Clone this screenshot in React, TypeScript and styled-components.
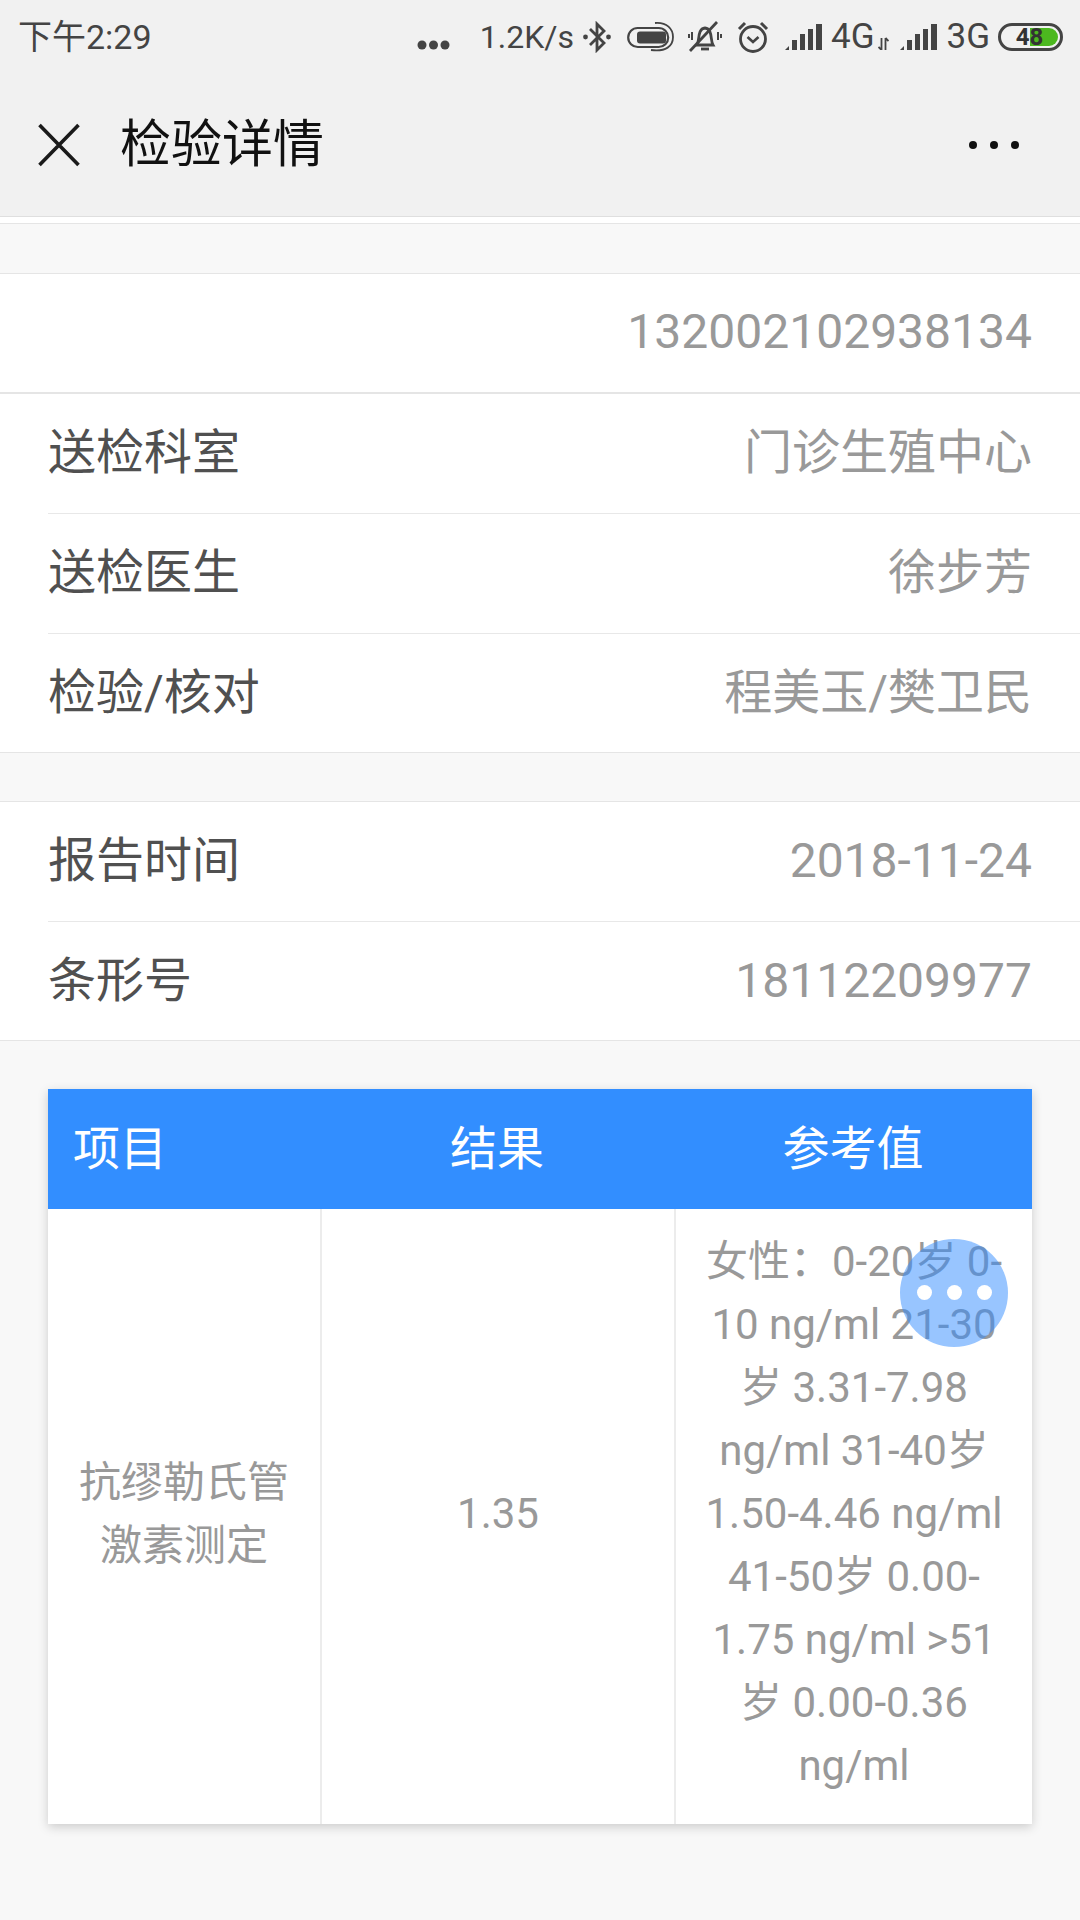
import React from "react";
import styled, { createGlobalStyle } from "styled-components";

const FONT = `Roboto, "Noto Sans CJK SC", sans-serif`;

interface InfoRow {
  label: string;
  value: string;
}

const doctorRows: InfoRow[] = [
  { label: "送检科室", value: "门诊生殖中心" },
  { label: "送检医生", value: "徐步芳" },
  { label: "检验/核对", value: "程美玉/樊卫民" },
];

const reportRows: InfoRow[] = [
  { label: "报告时间", value: "2018-11-24" },
  { label: "条形号", value: "18112209977" },
];

const SignalIcon = () => (
  <svg width="38" height="26" viewBox="0 0 38 26">
    <path d="M0 26 L4 22 V26 Z" fill="#444" />
    <rect x="7" y="16" width="5" height="10" fill="#444" />
    <rect x="15" y="10" width="5" height="16" fill="#444" />
    <rect x="23" y="5" width="5" height="21" fill="#444" />
    <rect x="31" y="0" width="6" height="26" fill="#444" />
  </svg>
);

const App: React.FC = () => {
  return (
    <Page>
      <GlobalStyle />
      <Header>
        <StatusBar>
          <StatusTime>下午2:29</StatusTime>
          <StatusRight>
            <StatusItem>
              <svg width="33" height="28" viewBox="0 0 33 28">
                <circle cx="5" cy="22" r="4.5" fill="#444" />
                <circle cx="16.5" cy="22" r="4.5" fill="#444" />
                <circle cx="28" cy="22" r="4.5" fill="#444" />
              </svg>
            </StatusItem>
            <StatusItem $gap={30}>
              <Speed>1.2K/s</Speed>
            </StatusItem>
            <StatusItem $gap={9}>
              <svg width="28" height="32" viewBox="0 0 28 32">
                <path d="M7 8 L21 22 L14 29 V3 L21 10 L7 24" fill="none" stroke="#444" strokeWidth="2.8" />
                <circle cx="2.5" cy="16" r="2.4" fill="#444" />
                <circle cx="25.5" cy="16" r="2.4" fill="#444" />
              </svg>
            </StatusItem>
            <StatusItem $gap={16}>
              <svg width="47" height="32" viewBox="0 0 47 32">
                <rect x="1.2" y="7" width="40" height="19" rx="9.5" fill="none" stroke="#444" strokeWidth="2.2" />
                <rect x="10" y="10.5" width="29" height="12" rx="3" fill="#444" />
                <path d="M28 2 C40 1 46 8 46 16 C46 25 39 31 24 29" fill="none" stroke="#444" strokeWidth="1.8" />
              </svg>
            </StatusItem>
            <StatusItem $gap={14}>
              <svg width="34" height="34" viewBox="0 0 34 34">
                <path d="M9 25 C12 20 9 9 17 8 C25 9 22 20 25 25 Z" fill="none" stroke="#444" strokeWidth="2.8" />
                <path d="M13 29 H21" stroke="#444" strokeWidth="2.8" />
                <path d="M29 2 L2 31" stroke="#444" strokeWidth="2.8" />
                <path d="M4 12 V20 M1 14 V18 M30 12 V20 M33 14 V18" stroke="#444" strokeWidth="2" />
              </svg>
            </StatusItem>
            <StatusItem $gap={15}>
              <svg width="32" height="32" viewBox="0 0 32 32">
                <circle cx="16" cy="18" r="12.5" fill="none" stroke="#444" strokeWidth="2.8" />
                <path d="M10.5 16 L16 21 L21.5 16" fill="none" stroke="#444" strokeWidth="2.6" />
                <path d="M2 8 L8 2 M24 2 L30 8" stroke="#444" strokeWidth="3" />
              </svg>
            </StatusItem>
            <StatusItem $gap={16}>
              <SignalIcon />
            </StatusItem>
            <StatusItem $gap={8}>
              <NetworkText>4G</NetworkText>
            </StatusItem>
            <StatusItem $gap={4}>
              <svg width="11" height="26" viewBox="0 0 11 26">
                <path d="M3.5 14 V26 M0.5 23 L3.5 26 M7.5 26 V14 M7.5 14 L10.5 17" fill="none" stroke="#444" strokeWidth="1.8" />
              </svg>
            </StatusItem>
            <StatusItem $gap={11}>
              <SignalIcon />
            </StatusItem>
            <StatusItem $gap={8}>
              <NetworkText>3G</NetworkText>
            </StatusItem>
            <StatusItem $gap={8}>
              <Battery>
                <BatteryFill />
                <BatteryText>48</BatteryText>
              </Battery>
            </StatusItem>
          </StatusRight>
        </StatusBar>
        <NavBar>
          <NavLeft>
            <svg width="42" height="44" viewBox="0 0 42 44">
              <path d="M1.5 2 L40.5 42 M40.5 2 L1.5 42" stroke="#1a1a1a" strokeWidth="3.6" />
            </svg>
            <NavTitle>检验详情</NavTitle>
          </NavLeft>
          <svg width="52" height="10" viewBox="0 0 52 10">
            <circle cx="5" cy="5" r="4" fill="#111" />
            <circle cx="26" cy="5" r="4" fill="#111" />
            <circle cx="47" cy="5" r="4" fill="#111" />
          </svg>
        </NavBar>
      </Header>

      <TopStrip />
      <GapBlock $height={49} />

      <SectionBlock>
        <SoloRow>
          <Value>132002102938134</Value>
        </SoloRow>
        {doctorRows.map((row) => (
          <Row key={row.label}>
            <Label>{row.label}</Label>
            <Value>{row.value}</Value>
          </Row>
        ))}
      </SectionBlock>

      <GapBlock $height={48} />

      <SectionBlock>
        {reportRows.map((row) => (
          <Row key={row.label}>
            <Label>{row.label}</Label>
            <Value>{row.value}</Value>
          </Row>
        ))}
      </SectionBlock>

      <TableCard>
        <TableHead>
          <HeadCell $left>项目</HeadCell>
          <HeadCell>结果</HeadCell>
          <HeadCell>参考值</HeadCell>
        </TableHead>
        <TableBody>
          <BodyCell>抗缪勒氏管激素测定</BodyCell>
          <BodyCell>1.35</BodyCell>
          <BodyCell>
            女性：0-20岁 0-10 ng/ml 21-30岁 3.31-7.98 ng/ml 31-40岁 1.50-4.46 ng/ml
            41-50岁 0.00-1.75 ng/ml &gt;51岁 0.00-0.36 ng/ml
          </BodyCell>
        </TableBody>
      </TableCard>

      <FloatButton>
        <FloatDot />
        <FloatDot />
        <FloatDot />
      </FloatButton>
    </Page>
  );
};

const GlobalStyle = createGlobalStyle`
  html, body {
    margin: 0;
    padding: 0;
    background: #f8f8f8;
  }
  * {
    box-sizing: border-box;
  }
`;

const Page = styled.div`
  position: relative;
  width: 1080px;
  height: 1920px;
  overflow: hidden;
  background: #f8f8f8;
  font-family: ${FONT};
`;

const Header = styled.header`
  background: #f1f1f1;
  border-bottom: 1px solid #dfdfdf;
  height: 217px;
`;

const StatusBar = styled.div`
  height: 74px;
  padding: 0 17px 0 18px;
  display: flex;
  align-items: center;
  justify-content: space-between;
  color: #444;
`;

const StatusTime = styled.span`
  font-size: 34px;
  line-height: 40px;
`;

const StatusRight = styled.div`
  display: flex;
  align-items: center;
`;

const StatusItem = styled.div<{ $gap?: number }>`
  display: flex;
  align-items: center;
  margin-left: ${(p) => p.$gap ?? 0}px;
`;

const Speed = styled.span`
  font-size: 32px;
  line-height: 36px;
`;

const NetworkText = styled.span`
  font-size: 35px;
  line-height: 36px;
`;

const Battery = styled.div`
  position: relative;
  width: 65px;
  height: 28px;
  border: 3px solid #444;
  border-radius: 14px;
  display: flex;
  align-items: center;
  justify-content: center;
`;

const BatteryFill = styled.div`
  position: absolute;
  top: 2px;
  bottom: 2px;
  right: 2px;
  width: 28px;
  background: #4cb81f;
  border-radius: 0 10px 10px 0;
`;

const BatteryText = styled.span`
  position: relative;
  left: -1px;
  font-size: 24px;
  font-weight: 700;
  line-height: 22px;
  color: #333;
`;

const NavBar = styled.div`
  height: 142px;
  padding: 0 60px 0 38px;
  display: flex;
  align-items: center;
  justify-content: space-between;
`;

const NavLeft = styled.div`
  display: flex;
  align-items: center;
  gap: 40px;
`;

const NavTitle = styled.h1`
  margin: 0;
  font-size: 51px;
  line-height: 60px;
  font-weight: 400;
  color: #111;
`;

const TopStrip = styled.div`
  height: 7px;
  background: #fff;
  border-bottom: 1px solid #e5e5e5;
`;

const GapBlock = styled.div<{ $height: number }>`
  height: ${(p) => p.$height}px;
  background: #f8f8f8;
`;

const SectionBlock = styled.section`
  background: #fff;
  border-top: 1px solid #e5e5e5;
  border-bottom: 1px solid #e5e5e5;
`;

const Row = styled.div`
  height: 120px;
  margin-left: 48px;
  padding-right: 48px;
  padding-bottom: 2px;
  display: flex;
  align-items: center;
  justify-content: space-between;
  border-bottom: 1px solid #e8e8e8;

  &:last-child {
    height: 118px;
    padding-bottom: 0;
    border-bottom: none;
  }
`;

const SoloRow = styled.div`
  height: 120px;
  padding-right: 48px;
  padding-bottom: 2px;
  display: flex;
  align-items: center;
  justify-content: flex-end;
  border-bottom: 2px solid #e5e5e5;
`;

const Label = styled.span`
  font-size: 48px;
  line-height: 60px;
  color: #505050;
`;

const Value = styled.span`
  font-size: 48px;
  line-height: 60px;
  color: #999;
`;

const TableCard = styled.div`
  margin: 48px 48px 0;
  background: #fff;
  box-shadow: 0 3px 10px rgba(0, 0, 0, 0.18);
`;

const TableHead = styled.div`
  display: grid;
  grid-template-columns: 272px 354px 358px;
  height: 120px;
  background: #328eff;
  align-items: center;
`;

const HeadCell = styled.div<{ $left?: boolean }>`
  font-size: 47px;
  line-height: 60px;
  color: #fff;
  text-align: ${(p) => (p.$left ? "left" : "center")};
  padding-left: ${(p) => (p.$left ? "25px" : "0")};
`;

const TableBody = styled.div`
  display: grid;
  grid-template-columns: 272px 354px 358px;
`;

const BodyCell = styled.div`
  padding: 21px 20px 27px;
  min-height: 615px;
  display: flex;
  align-items: center;
  justify-content: center;
  text-align: center;
  font-size: 42px;
  line-height: 63px;
  color: #999;
  border-left: 2px solid #ececec;

  &:first-child {
    border-left: none;
  }
`;

const FloatButton = styled.div`
  position: absolute;
  left: 900px;
  top: 1239px;
  width: 108px;
  height: 108px;
  border-radius: 50%;
  background: rgba(50, 140, 255, 0.5);
  display: flex;
  align-items: center;
  justify-content: center;
  gap: 15px;
`;

const FloatDot = styled.span`
  width: 15px;
  height: 15px;
  margin-bottom: 2px;
  border-radius: 50%;
  background: #fff;
`;

export default App;
